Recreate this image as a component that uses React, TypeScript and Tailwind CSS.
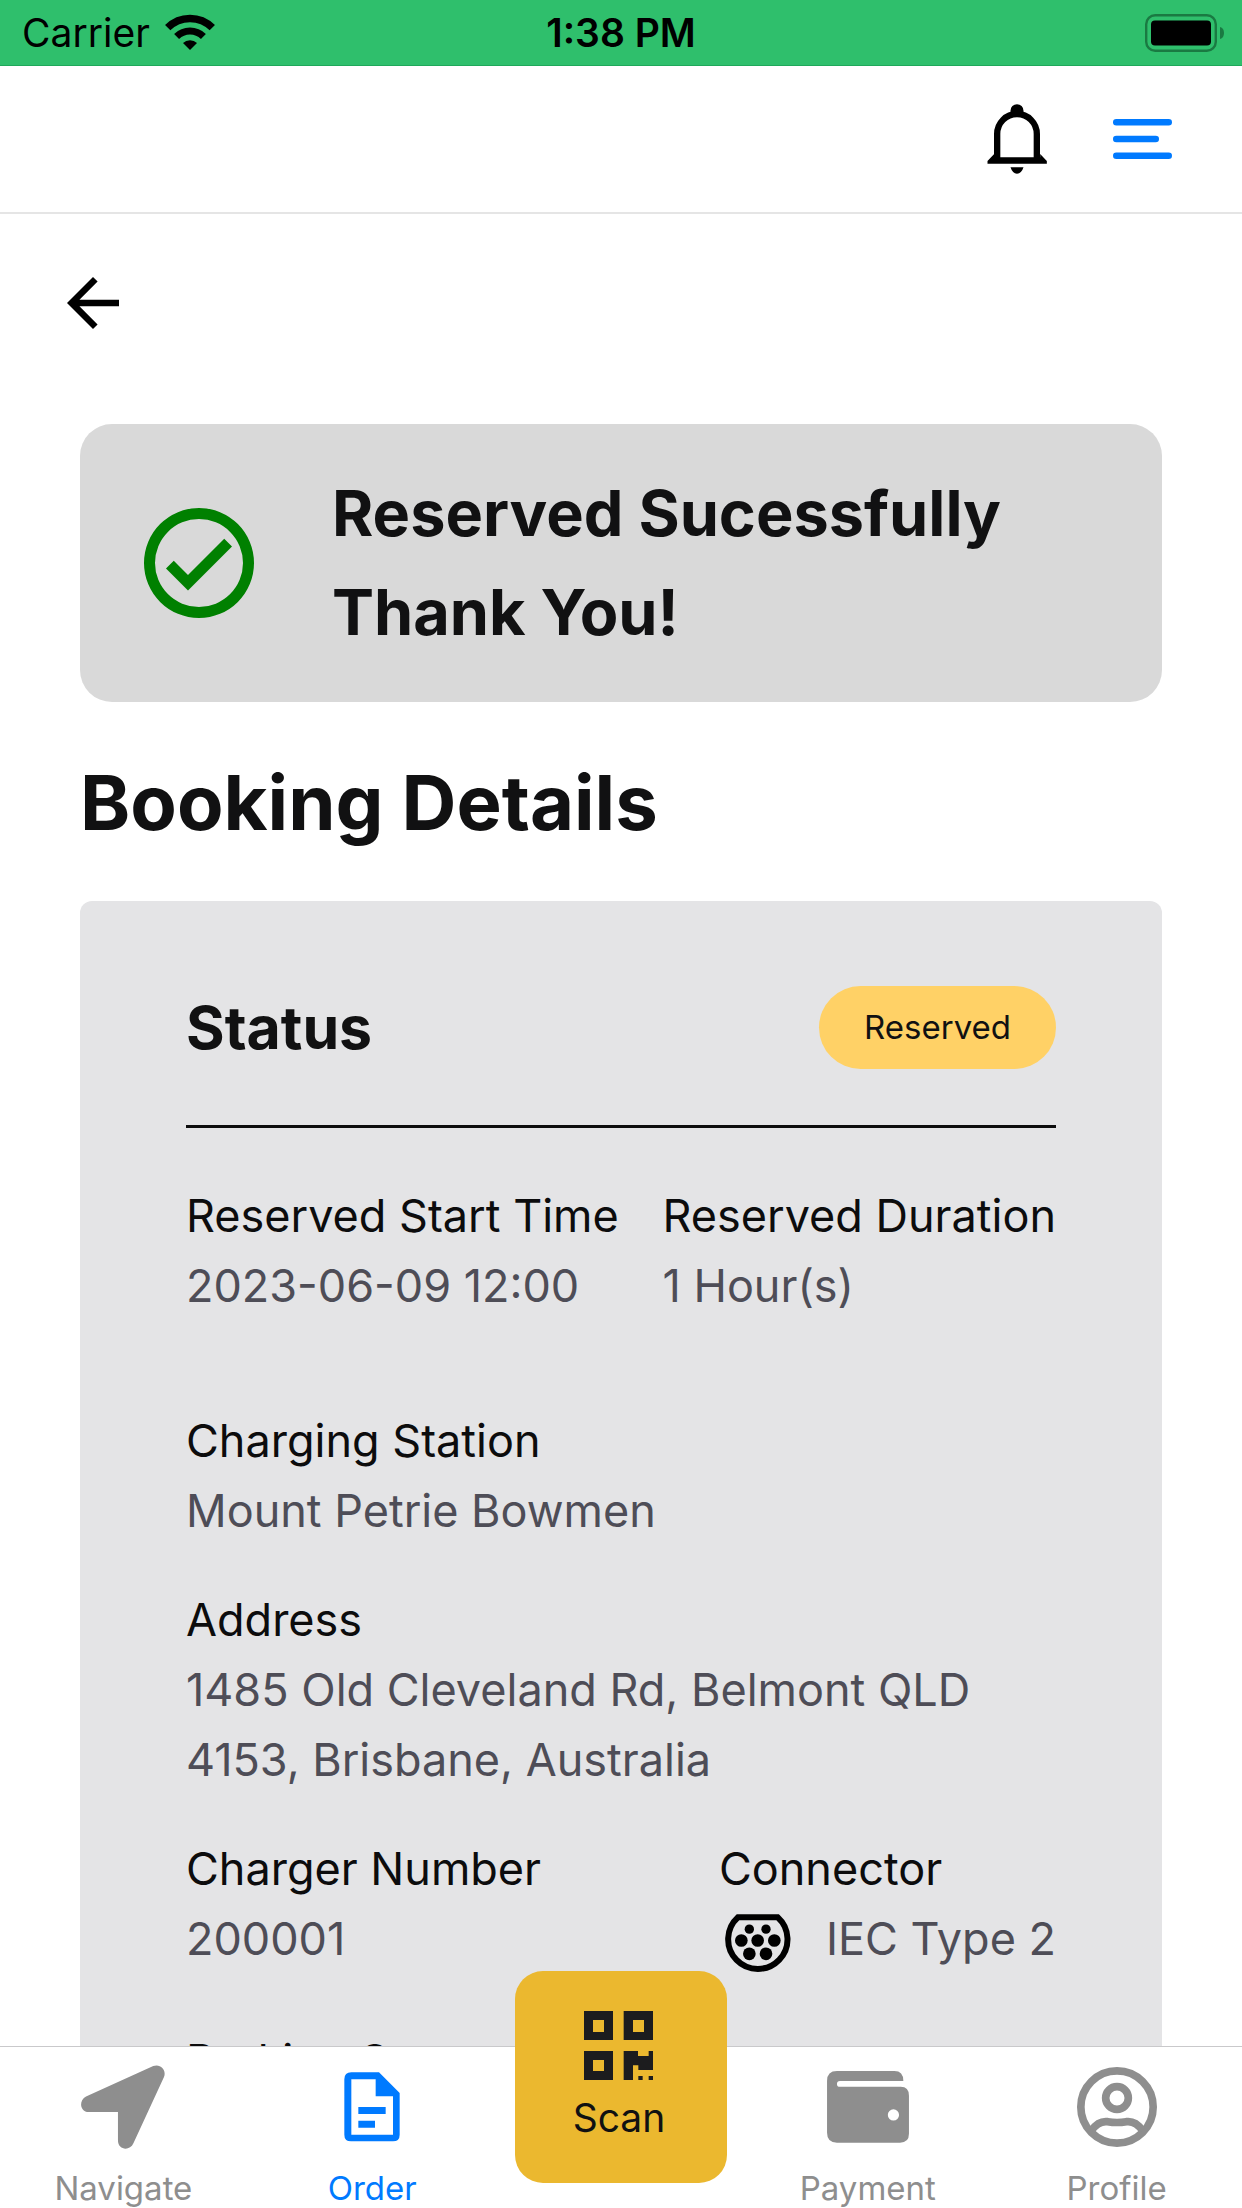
import type { ReactNode } from "react";

function WifiIcon() {
  return (
    <svg viewBox="-25 -36 50 37" className="h-[37px] w-[50px]" aria-hidden="true">
      <path d="M-22.3-22.3A31.5 31.5 0 0 1 22.3-22.3" fill="none" stroke="#000" strokeWidth="7.5" />
      <path d="M-13.4-13.4A19 19 0 0 1 13.4-13.4" fill="none" stroke="#000" strokeWidth="7" />
      <path d="M0 0L-7-7A10 10 0 0 1 7-7Z" />
    </svg>
  );
}

function BatteryIcon() {
  return (
    <svg viewBox="0 0 79 38" className="h-[38px] w-[79px]" aria-hidden="true">
      <rect x="1.2" y="1.2" width="69.6" height="35.6" rx="9" fill="none" stroke="#1a7a42" strokeWidth="2.4" />
      <rect x="6" y="6.500" width="60" height="25" rx="4" />
      <path d="M75 13q4 1 4 6t-4 6z" fill="#1a7a42" />
    </svg>
  );
}

function BellIcon() {
  return (
    <svg viewBox="141 317 179 210" className="h-[70px] w-[60px]" aria-hidden="true">
      <path d="M171 480V407a59.500 60 0 0 1 119 0V480" fill="none" stroke="#000" strokeWidth="19" />
      <path d="M211 337a19.500 19.500 0 0 1 39 0v18h-39z" />
      <path d="M162 467l-20 21v8h178v-8l-20-21v10H162zM211 507h39q-6 19-19.500 19T211 507z" />
    </svg>
  );
}

function MenuIcon() {
  return (
    <svg viewBox="0 0 59 40" className="h-[40px] w-[59px]" fill="#007aff" aria-hidden="true">
      <rect width="59" height="6.600" rx="3.300" />
      <rect y="16.700" width="46" height="6.600" rx="3.300" />
      <rect y="33.400" width="59" height="6.600" rx="3.300" />
    </svg>
  );
}

function BackIcon() {
  return (
    <svg viewBox="0 0 24 24" className="size-[78px]" aria-hidden="true">
      <path d="M20 11H7.830l5.590-5.590L12 4l-8 8 8 8 1.410-1.410L7.830 13H20z" />
    </svg>
  );
}

function CheckIcon() {
  return (
    <svg viewBox="2 2 20 20" className="size-[110px] shrink-0" fill="#008000" aria-hidden="true">
      <path d="M12 2a10 10 0 1 0 0 20 10 10 0 0 0 0-20zm0 18a8 8 0 1 1 0-16 8 8 0 0 1 0 16zm4.590-12.420L10 14.170l-2.590-2.580L6 13l4 4 8-8z" />
    </svg>
  );
}

function TypeTwoIcon() {
  return (
    <svg viewBox="137 280 198 179" className="h-[60px] w-[66px]" aria-hidden="true">
      <path d="M176 289h119A89 89 0 1 1 176 289z" fill="none" stroke="#000" strokeWidth="18" />
      <circle cx="210" cy="325" r="14" />
      <circle cx="260" cy="325" r="14" />
      <circle cx="186" cy="359" r="19" />
      <circle cx="235" cy="359" r="19" />
      <circle cx="285" cy="359" r="19" />
      <circle cx="210" cy="399" r="19" />
      <circle cx="260" cy="399" r="19" />
    </svg>
  );
}

function NavigateIcon() {
  return (
    <svg viewBox="243 317 250 250" className="size-[84px]" fill="currentColor" aria-hidden="true">
      <path d="M458 320c22-8 40 12 32 33L399 550c-11 25-46 20-46-8V457H266c-26 0-31-34-8-46z" />
    </svg>
  );
}

function OrderIcon() {
  return (
    <svg viewBox="1029 338 168 208" className="h-[70px] w-[56px]" fill="currentColor" aria-hidden="true">
      <path
        fillRule="evenodd"
        d="M1051 338h83l62 62v125q0 20-20 20h-126q-20 0-20-20V359q0-21 21-21zM1051 359v166h125V410h-52V359z"
      />
      <path d="M1072 442h82v21h-82zM1072 483h50v21h-50z" />
    </svg>
  );
}

function WalletIcon() {
  return (
    <svg viewBox="260 333 248 218" className="h-[72px] w-[82px]" fill="currentColor" aria-hidden="true">
      <path
        fillRule="evenodd"
        d="M290 333h174q27 0 27 30H299a9 9 0 0 0 0 18h184q25 0 25 27v115q0 27-27 27H290q-30 0-30-30V363q0-30 30-30zM461 449a17 17 0 1 0 0 34 17 17 0 0 0 0-34z"
      />
    </svg>
  );
}

function ProfileIcon() {
  return (
    <svg viewBox="1010 322 240 240" className="size-[80px]" fill="none" stroke="currentColor" strokeWidth="23" aria-hidden="true">
      <circle cx="1130" cy="442" r="108.500" />
      <circle cx="1130" cy="415" r="34" />
      <path d="M1054 512c14-20 32-28 48-26q28 5 56 0c16-2 34 6 48 26" />
    </svg>
  );
}

function QrIcon() {
  return (
    <svg viewBox="315 213 207 207" className="size-[69px]" fill="#1c1c1e" aria-hidden="true">
      <path
        fillRule="evenodd"
        d="M315 213h87v87h-87zM342 240v36h33v-36zM434 213h88v87h-88zM462 240v36h33v-36zM315 333h87v87h-87zM342 360v33h33v-33z"
      />
      <path d="M434 333h43v15h32v-15h13v57h-44v-14h-16v44h-28zM478 408h13v12h-13zM509 408h13v12h-13z" />
    </svg>
  );
}

function Field({ label, children }: { label: string; children: ReactNode }) {
  return (
    <div className="text-[45px] leading-[70px]">
      <dt className="text-[#0c0c0d]">{label}</dt>
      <dd className="text-[#4e4d57]">{children}</dd>
    </div>
  );
}

function Tab({ label, icon, active = false }: { label: string; icon: ReactNode; active?: boolean }) {
  return (
    <a
      href="#"
      aria-current={active ? "page" : undefined}
      className={`flex flex-1 flex-col items-center gap-[19px] pt-[18px] pr-[2px] text-[33px] leading-[40px] ${
        active ? "text-[#007aff]" : "text-[#8e8e8e]"
      }`}
    >
      <span className="flex h-[84px] items-center">{icon}</span>
      {label}
    </a>
  );
}

export default function App() {
  return (
    <div className="flex h-screen flex-col bg-white font-['Inter',sans-serif] text-[#111112]">
      <div className="grid h-[66px] shrink-0 grid-cols-3 items-center border-b border-[#1fa85a] bg-[#2fbf6c] px-[18px] text-[39px] leading-[48px] text-black">
        <div className="flex items-center gap-[15px] pl-1">
          <span>Carrier</span>
          <WifiIcon />
        </div>
        <span className="text-center font-semibold">1:38 PM</span>
        <div className="flex justify-end">
          <BatteryIcon />
        </div>
      </div>

      <header className="flex h-[148px] shrink-0 items-center justify-end gap-[66px] border-b-2 border-[#e5e5e5] pr-[70px]">
        <button type="button" aria-label="Notifications">
          <BellIcon />
        </button>
        <button type="button" aria-label="Menu">
          <MenuIcon />
        </button>
      </header>

      <main className="min-h-0 flex-1 overflow-y-auto [scrollbar-width:none]">
        <div className="px-[54px] pt-[50px]">
          <button type="button" aria-label="Back" className="block">
            <BackIcon />
          </button>
        </div>

        <div className="px-[80px] pt-[82px]">
          <section className="flex items-center gap-[78px] rounded-[32px] bg-[#d9d9d9] px-[64px] py-[40px]">
            <CheckIcon />
            <p className="text-[63px] leading-[99px] font-bold">
              Reserved Sucessfully
              <br />
              Thank You!
            </p>
          </section>

          <h1 className="mt-[50px] text-[76px] leading-[100px] font-bold">Booking Details</h1>

          <section className="mt-[49px] rounded-[12px] bg-[#e4e4e6] px-[106px] pt-[85px] pb-[106px]">
            <div className="flex items-center justify-between border-b-3 border-[#0c0c0d] pb-[56px]">
              <h2 className="text-[59px] leading-[83px] font-bold">Status</h2>
              <span className="rounded-full bg-[#ffd166] px-[45px] text-[33px] leading-[83px]">Reserved</span>
            </div>

            <dl className="mt-[53px] flex flex-col gap-[39px]">
              <div className="mb-[46px] flex justify-between">
                <Field label="Reserved Start Time">2023-06-09 12:00</Field>
                <Field label="Reserved Duration">1 Hour(s)</Field>
              </div>
              <Field label="Charging Station">Mount Petrie Bowmen</Field>
              <Field label="Address">1485 Old Cleveland Rd, Belmont QLD 4153, Brisbane, Australia</Field>
              <div className="mb-[13px] flex justify-between">
                <Field label="Charger Number">200001</Field>
                <Field label="Connector">
                  <span className="flex items-end gap-[35px] pl-[6px]">
                    <TypeTwoIcon />
                    IEC Type 2
                  </span>
                </Field>
              </div>
              <Field label="Parking Spot">12</Field>
            </dl>
          </section>
        </div>
      </main>

      <nav className="relative z-10 flex h-[162px] shrink-0 border-t border-[#c9c9cb] bg-white">
        <Tab label="Navigate" icon={<NavigateIcon />} />
        <Tab label="Order" icon={<OrderIcon />} active />
        <div className="flex flex-1 justify-center">
          <button
            type="button"
            className="-mt-[76px] flex size-[212px] flex-col items-center gap-[14px] rounded-[28px] bg-[#ebb82f] pt-[40px] pr-1 text-[39px] leading-[48px] text-[#111112]"
          >
            <QrIcon />
            Scan
          </button>
        </div>
        <Tab label="Payment" icon={<WalletIcon />} />
        <Tab label="Profile" icon={<ProfileIcon />} />
      </nav>
    </div>
  );
}
